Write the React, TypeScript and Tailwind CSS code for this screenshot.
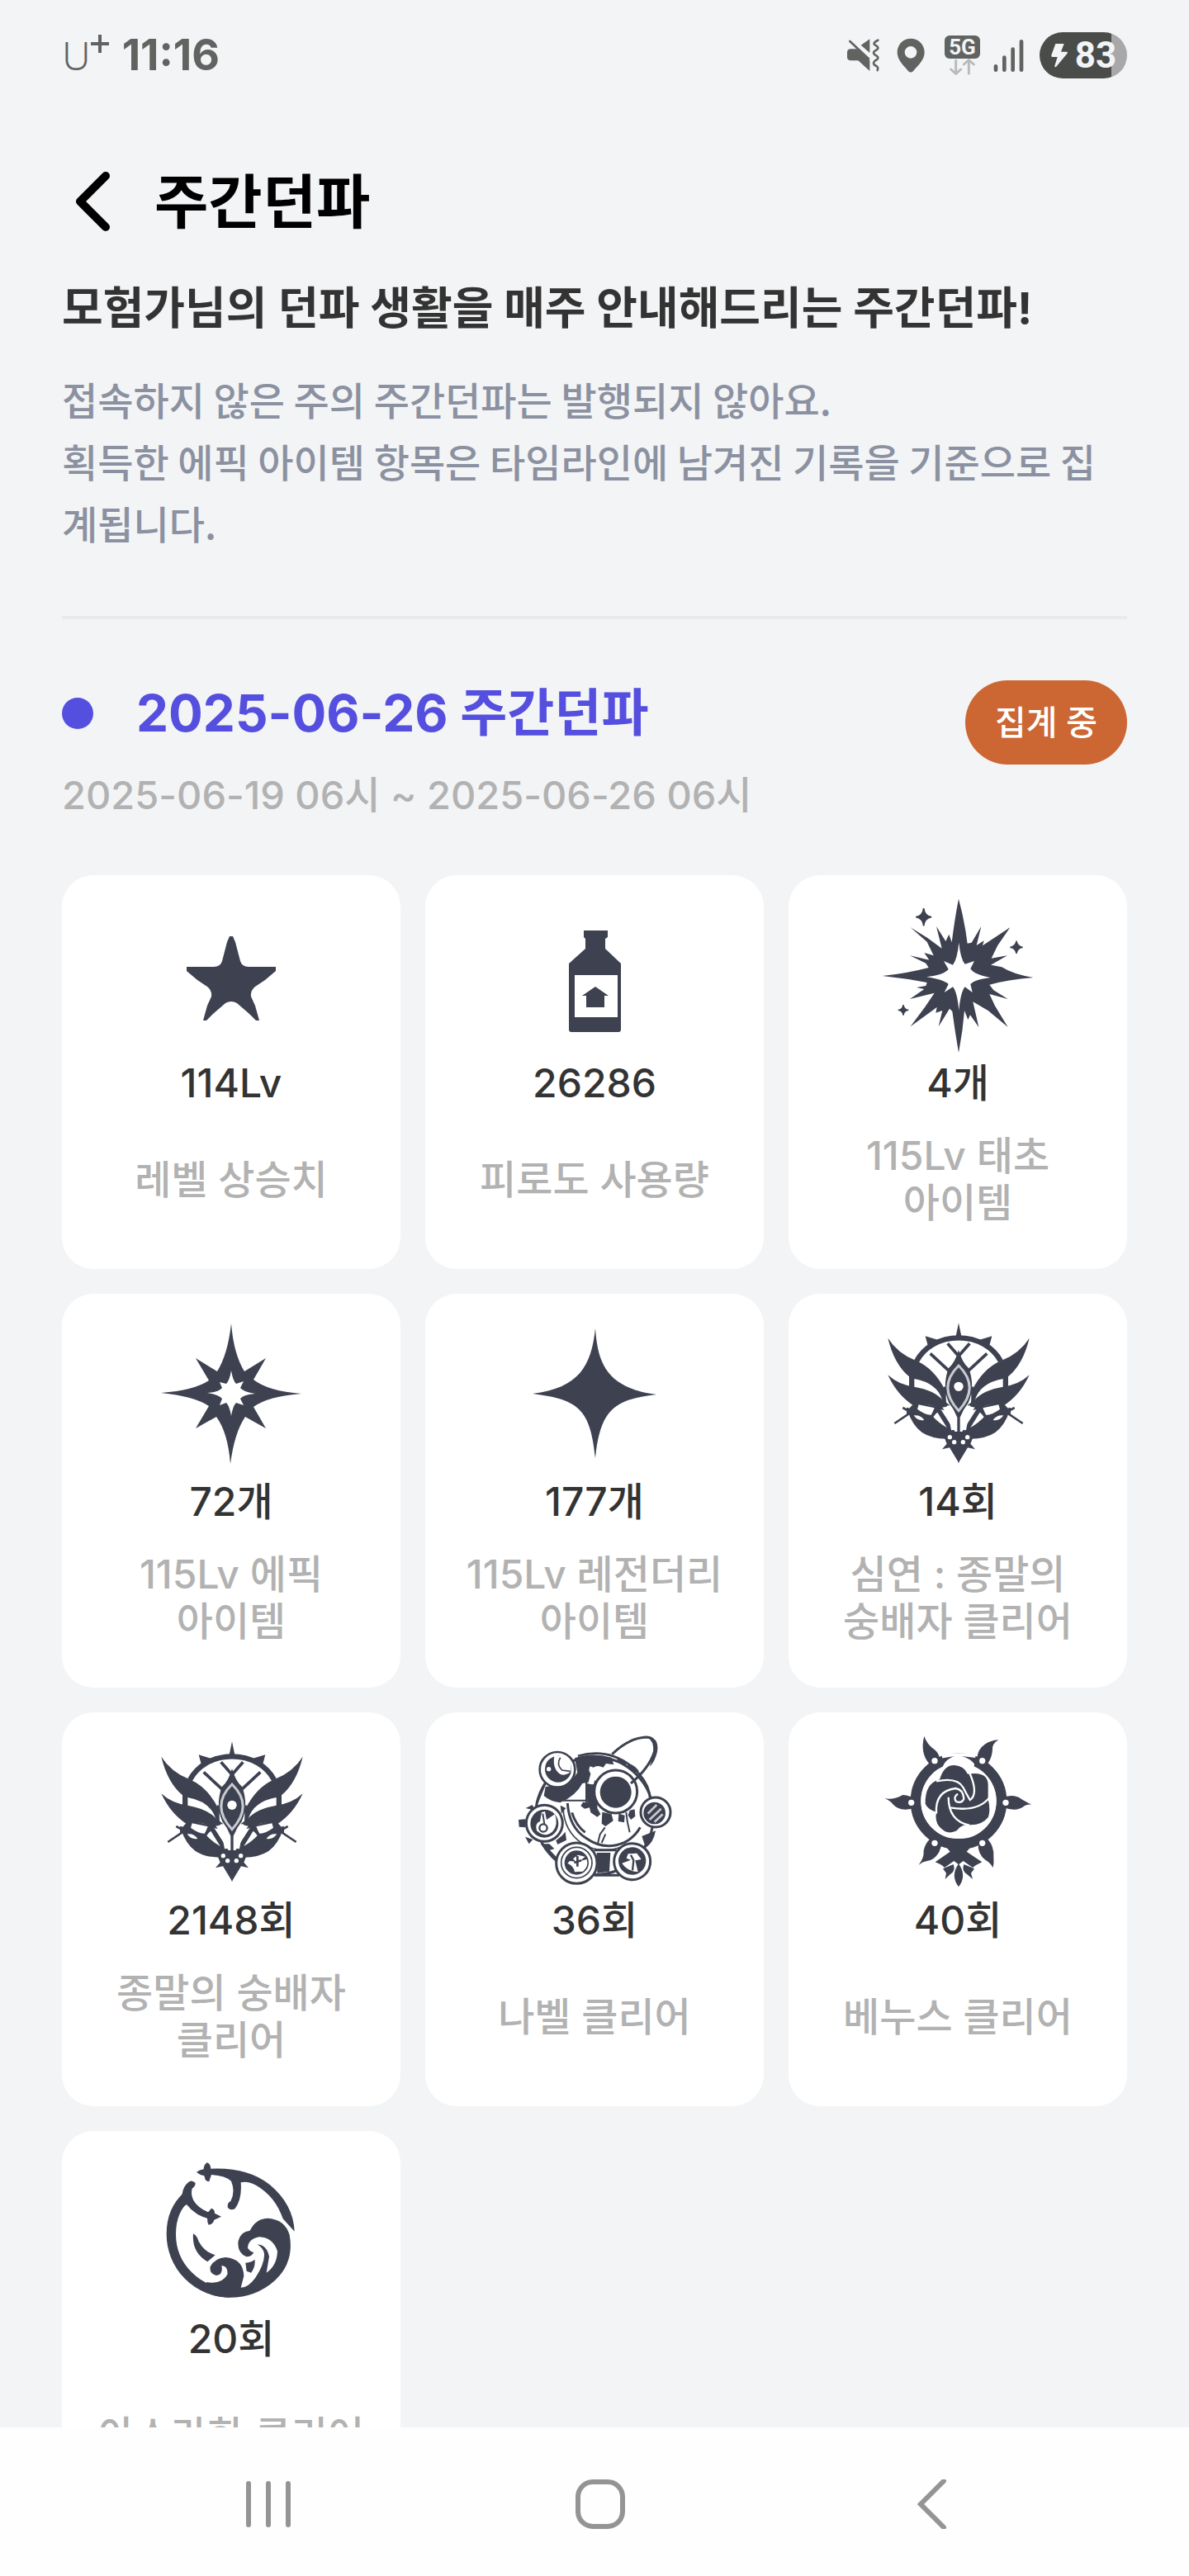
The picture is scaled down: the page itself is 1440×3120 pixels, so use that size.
import type { ReactNode } from 'react';

const INK = '#3e4150';

function StarIcon() {
  return (
    <svg viewBox="0 0 190 190" className="h-[190px] w-[190px]" fill={INK} aria-hidden="true">
      <path d="M93 46H97L100 53L106 76Q108 83 116 83H149V88L136 99L124 107Q118 112 119 119L124 130L129 148H125L117 140L102 127Q95 123 88 127L73 140L65 148H61L66 130L71 119Q72 112 66 107L54 99L41 88V83H74Q82 83 84 76L90 53Z" />
    </svg>
  );
}

function PotionIcon() {
  return (
    <svg viewBox="0 0 190 190" className="h-[190px] w-[190px]" fill={INK} aria-hidden="true">
      <path d="M82 39H111V47L108 49V61L127 79V159Q127 162 124 162H67Q64 162 64 159V79L84 61V49L82 47Z" />
      <path d="M71 93H123V144H71Z" fill="#fff" />
      <path d="M96 107L112 118H107V132H85V118H80Z" />
    </svg>
  );
}

function BurstIcon() {
  return (
    <svg viewBox="75 54 570 570" className="h-[190px] w-[190px]" fill={INK} aria-hidden="true">
      <path d="M363 56Q378 110 388 170L395 218L410 215L445 156L428 225L455 208L450 226L550 160L505 225L482 272L540 262L480 296L520 304Q560 330 634 342Q540 350 475 368L490 388L542 420L475 402L495 445L542 522L470 462L415 430L436 522L405 478L397 495L384 462Q378 540 363 614Q350 540 340 465L330 455L290 520L304 462L280 470L284 450L188 520L240 450L275 398L186 420L238 384L210 378L244 372L248 360Q170 345 86 336Q170 328 254 306L244 290L186 262L256 278L238 252L272 262L248 212L188 160L250 198L302 236L282 156L316 210L328 185L338 214Q350 120 363 56Z" />
      <path d="M364 215Q370 275 386 293L420 282L406 310Q420 332 478 342Q420 350 406 366L413 396L386 376Q370 395 364 462Q358 395 342 376L311 396L326 366Q310 350 246 340Q310 332 326 312L309 282L342 296Q358 275 364 215Z" fill="#fff" />
      <path d="M236 90Q239 118 264 122Q239 126 236 154Q233 126 208 122Q233 118 236 90Z" stroke={INK} strokeWidth="5" />
      <path d="M573 209Q576 229 596 232Q576 235 573 255Q570 235 550 232Q570 229 573 209Z" stroke={INK} strokeWidth="4" />
      <path d="M162 441Q164 458 181 460Q164 462 162 479Q160 462 143 460Q160 458 162 441Z" stroke={INK} strokeWidth="4" />
    </svg>
  );
}

function EpicIcon() {
  return (
    <svg viewBox="0 0 190 190" className="h-[190px] w-[190px]" fill={INK} aria-hidden="true">
      <path d="M95 8Q98 45 111 66L137 50L122 76Q140 90 180 93Q140 96 122 109L137 135L112 121Q99 140 94 178Q91 140 77 121L52 135L68 108Q50 96 10 92Q50 89 68 77L52 50L78 66Q91 45 95 8Z" />
      <path d="M95 65Q97 77 101 81L110 78L106 86Q110 91 124 93Q110 94 106 99L110 107L101 104Q97 108 95 120Q93 108 89 104L81 107L84 99Q80 94 66 92Q80 91 84 86L81 79L89 81Q93 77 95 65Z" fill="#fff" />
    </svg>
  );
}

function LegendaryIcon() {
  return (
    <svg viewBox="0 0 190 190" className="h-[190px] w-[190px]" fill={INK} aria-hidden="true">
      <path d="M96 14C99 58 111 86 170 94C119 100 102 112 96 171C90 112 76 100 20 93C76 86 91 60 96 14Z" />
    </svg>
  );
}

function WingHalf() {
  return (
    <>
      <path d="M180 206C207 156 262 121 334 121" fill="none" stroke={INK} strokeWidth="19" />
      <path d="M212 115L262 130L224 160Z" />
      <path d="M76 122Q112 178 178 204Q245 232 286 315L274 348Q255 285 172 270V302L153 297V262Q98 215 76 122Z" />
      <path d="M76 256Q115 292 172 299Q245 312 274 346L300 365L286 385L262 380Q235 362 195 360L170 368Q110 330 76 256Z" />
      <path d="M147 384L178 352L264 374L320 462H334V489L290 488Q235 488 200 465Q165 440 147 384Z" />
      <path d="M188 364L245 376L234 402Q205 398 183 380Z" fill="#fff" />
      <path d="M170 403Q195 400 208 420Q185 425 170 403Z" fill="#fff" />
      <path d="M256 392L290 447Q262 432 238 406Z" fill="#fff" />
      <path d="M274 374L296 366L322 455L306 457Q298 400 274 374Z" fill="#fff" />
      <path d="M130 375L160 392L100 432M148 375V400" fill="none" stroke={INK} strokeWidth="8" />
      <path d="M230 178L302 245M293 142L334 188M262 372L236 406" fill="none" stroke={INK} strokeWidth="11" />
      <path d="M286 300Q276 330 284 372" fill="none" stroke={INK} strokeWidth="13" />
      <path d="M276 470H334V576L300 520L273 526L290 506Z" />
      <circle cx="301" cy="482" r="8" fill="#fff" />
      <circle cx="317" cy="500" r="8" fill="#fff" />
    </>
  );
}

function WingsIcon() {
  return (
    <svg viewBox="45 45 570 570" className="h-[190px] w-[190px]" fill={INK} aria-hidden="true">
      <path d="M333 67L344 120H322Z" />
      <WingHalf />
      <g transform="matrix(-1 0 0 1 666 0)">
        <WingHalf />
      </g>
      <path d="M333 165Q346 212 370 232Q394 300 368 358Q350 380 338 410V480H328V410Q316 380 298 358Q272 300 296 232Q320 212 333 165Z" />
      <path d="M333 222Q412 300 333 386Q254 300 333 222Z" fill="none" stroke="#c9cad0" strokeWidth="9" />
      <circle cx="333" cy="298" r="17" fill="#fff" />
    </svg>
  );
}

function MachineIcon() {
  return (
    <svg viewBox="45 66 570 570" className="h-[190px] w-[190px]" fill={INK} aria-hidden="true">
      <circle cx="330" cy="358" r="214" fill="#fff" stroke={INK} strokeWidth="9" />
      <path d="M258 148Q320 126 392 146L400 172L372 168L362 182Q340 172 326 182L314 178Q306 190 316 205L308 236L286 240Q262 286 205 310Q170 306 146 285L152 252L240 240L268 200Z" />
      <path d="M270 140Q400 105 492 205Q545 265 528 330" fill="none" stroke={INK} strokeWidth="8" />
      <path d="M412 148L440 156L446 174L414 164ZM450 166Q475 172 492 196L476 200L452 182Z" />
      <path d="M232 312Q238 400 298 438Q365 486 438 455Q476 436 496 400M248 346Q262 392 296 418" fill="none" stroke={INK} strokeWidth="9" />
      <path d="M216 330Q220 415 285 458Q350 500 430 470" fill="none" stroke={INK} strokeWidth="5" />
      <path d="M216 302H330M300 236V310" fill="none" stroke={INK} strokeWidth="6" />
      <path d="M300 238Q325 250 345 236L340 330L352 352L340 362L316 346L312 328L294 332L280 322L288 308L304 310Z" />
      <circle cx="407" cy="270" r="78" fill="#fff" stroke={INK} strokeWidth="9" />
      <circle cx="407" cy="272" r="57" />
      <path d="M334 230Q318 272 336 315" fill="none" stroke={INK} strokeWidth="7" />
      <path d="M358 344L392 352L398 376L370 396L356 386ZM418 350L440 356L438 382L416 378ZM458 338L476 334L478 360L462 372L452 356Z" />
      <path d="M368 400L350 425L342 458M445 345Q448 380 458 418M370 424L356 456" fill="none" stroke={INK} strokeWidth="6" />
      <path d="M394 134Q455 74 520 72Q558 74 548 124Q528 186 462 240" fill="none" stroke={INK} strokeWidth="9" />
      <path d="M508 68Q568 68 558 125Q550 160 530 180Q548 130 543 105Q540 76 508 68Z" />
      <path d="M338 492H388L384 560L340 566ZM502 432L552 412Q545 455 516 474Z" />
      <path d="M328 482H410M330 574H420M150 470L196 518M120 312L150 240" fill="none" stroke={INK} strokeWidth="9" />
      <path d="M80 330L104 318L114 338ZM54 372L78 370V400L56 398ZM78 434L106 444L92 460ZM206 320L226 330L210 350ZM212 430L224 416L228 446L196 462L190 448ZM134 460H166L184 478L156 486Z" />
      <circle cx="195" cy="190" r="64" fill="#fff" stroke={INK} strokeWidth="8" />
      <circle cx="198" cy="188" r="48" />
      <path d="M184 140Q176 186 205 206Q225 215 244 196Q250 155 218 140Z" fill="#fff" />
      <path d="M206 146Q190 170 212 192L242 196" fill="none" stroke={INK} strokeWidth="5" />
      <circle cx="164" cy="188" r="8" fill="#fff" />
      <circle cx="148" cy="385" r="66" fill="#fff" stroke={INK} strokeWidth="9" />
      <circle cx="148" cy="386" r="51" />
      <path d="M138 345L150 342L156 372L186 352Q200 390 178 415Q150 440 120 412Q112 385 132 378Z" fill="#fff" />
      <circle cx="144" cy="402" r="14" fill="none" stroke={INK} strokeWidth="7" />
      <path d="M142 350L148 388" fill="none" stroke={INK} strokeWidth="6" />
      <circle cx="265" cy="530" r="74" fill="#fff" stroke={INK} strokeWidth="9" />
      <circle cx="265" cy="528" r="56" fill="none" stroke={INK} strokeWidth="5" />
      <circle cx="265" cy="528" r="44" />
      <path d="M232 530Q255 540 258 562L288 560Q310 540 302 516L278 522L296 506L270 500L252 514L262 524L240 522Z" fill="#fff" />
      <path d="M256 528L282 520M268 504V542" fill="none" stroke={INK} strokeWidth="8" />
      <circle cx="467" cy="524" r="66" fill="#fff" stroke={INK} strokeWidth="9" />
      <circle cx="467" cy="522" r="50" />
      <path d="M430 530Q450 560 488 562L478 520L500 516L484 494L452 496L446 512L462 518Z" fill="#fff" />
      <path d="M462 500L472 520L468 556" fill="none" stroke={INK} strokeWidth="7" />
      <circle cx="552" cy="345" r="54" fill="#fff" stroke={INK} strokeWidth="9" />
      <circle cx="548" cy="348" r="40" />
      <path d="M524 350L556 318M530 372L572 332M548 380L578 352" fill="none" stroke="#c9cad0" strokeWidth="8" />
    </svg>
  );
}

function RoseIcon() {
  return (
    <svg viewBox="45 66 570 570" className="h-[190px] w-[190px]" fill={INK} aria-hidden="true">
      <circle cx="333" cy="305" r="156" fill="none" stroke={INK} strokeWidth="38" />
      <path d="M272 130H396L388 185H276Z" fill="#fff" />
      <path d="M208 68Q216 96 246 118Q262 132 264 150L318 141Q276 156 272 194L246 192L226 168Q192 130 208 68Z" />
      <path d="M478 82Q454 96 456 118Q454 146 440 166L418 198L398 194Q396 156 344 141L400 148Q402 116 428 98Q448 84 478 82Z" />
      <path d="M64 295Q100 300 130 282Q158 284 178 300L170 330Q120 345 94 316Q84 302 64 295Z" />
      <path d="M598 317Q572 304 560 296Q535 278 496 290V328Q545 345 572 322Q584 314 598 317Z" />
      <path d="M188 536Q208 512 206 484Q212 455 232 440L272 462L262 490Q244 520 218 522Q202 524 188 536Z" />
      <path d="M458 546Q448 528 430 518Q402 498 404 456L440 444Q462 470 460 505Q462 528 458 546Z" />
      <path d="M262 440H404L362 488L418 526Q396 536 384 546L350 522L333 535L316 522L282 546Q270 534 248 526L302 488Z" />
      <path d="M276 550L314 534Q324 560 300 572L284 588L288 566ZM390 550L352 534Q342 560 366 572L384 588L378 566ZM333 532Q364 576 333 616Q302 576 333 532Z" />
      <circle cx="333" cy="303" r="137" fill="#fff" />
      <path d="M264 226Q280 172 318 174Q352 176 366 206Q440 194 440 246V296Q450 340 440 364Q414 396 362 390Q340 392 326 412Q290 430 262 396Q246 376 252 344Q220 334 212 314Q210 240 264 226Z" />
      <path d="M252 232Q330 216 350 256Q362 280 374 300M372 200Q408 280 372 302M446 290Q404 346 302 328M372 392Q296 376 296 290M252 350Q246 268 322 258Q350 262 352 296Q344 314 324 306Q312 290 330 278" fill="none" stroke="#fff" strokeWidth="7" />
      <circle cx="246" cy="158" r="11" fill="#fff" />
      <circle cx="419" cy="158" r="11" fill="#fff" />
      <circle cx="161" cy="310" r="11" fill="#fff" />
      <circle cx="504" cy="310" r="11" fill="#fff" />
      <circle cx="246" cy="457" r="11" fill="#fff" />
      <circle cx="419" cy="457" r="11" fill="#fff" />
    </svg>
  );
}

function WaveIcon() {
  return (
    <svg viewBox="375 147 570 570" className="h-[190px] w-[190px]" fill={INK} aria-hidden="true">
      <path d="M500 300Q442 350 442 437A213 213 0 0 0 655 651" fill="none" stroke={INK} strokeWidth="34" />
      <path d="M504 250Q516 238 530 252Q530 264 518 272Q510 300 532 328Q556 354 590 362L586 384Q530 372 498 330L470 350L462 320L482 292Q486 264 504 250Z" />
      <path d="M572 178Q584 180 586 200Q720 194 800 258Q886 330 890 428L848 382Q820 300 750 260Q720 244 695 250Q700 310 674 345Q658 354 648 342Q644 324 658 318Q676 284 660 245Q640 226 588 222L580 246Q572 248 566 240L562 226Q544 222 534 213Q544 204 560 202Q560 186 572 178Z" />
      <path d="M588 344Q600 346 600 362L624 374L598 386Q594 402 578 404Q572 392 574 384L566 370Z" />
      <path d="M715 520Q680 505 686 462Q694 428 728 425Q750 380 795 380Q855 385 872 440Q890 540 820 605Q750 668 655 668Q600 668 550 640L572 612Q624 622 646 585Q650 555 625 552Q632 586 606 588Q580 582 584 556Q600 525 640 522Q704 528 706 590L695 632Q722 632 748 596Q782 545 780 510Q778 490 755 475Q790 478 798 520L788 578Q826 552 828 500Q812 450 762 448Q722 455 720 488Q730 502 742 504Q735 520 715 520Z" />
      <path d="M522 436Q536 444 542 464Q562 502 602 514L574 538Q516 504 522 436ZM712 542Q734 540 746 530Q748 560 732 578L716 572Z" />
    </svg>
  );
}

type Stat = { value: string; label: string; icon: ReactNode };

const stats: Stat[] = [
  { value: '114Lv', label: '레벨 상승치', icon: <StarIcon /> },
  { value: '26286', label: '피로도 사용량', icon: <PotionIcon /> },
  { value: '4개', label: '115Lv 태초\n아이템', icon: <BurstIcon /> },
  { value: '72개', label: '115Lv 에픽\n아이템', icon: <EpicIcon /> },
  { value: '177개', label: '115Lv 레전더리\n아이템', icon: <LegendaryIcon /> },
  { value: '14회', label: '심연 : 종말의\n숭배자 클리어', icon: <WingsIcon /> },
  { value: '2148회', label: '종말의 숭배자\n클리어', icon: <WingsIcon /> },
  { value: '36회', label: '나벨 클리어', icon: <MachineIcon /> },
  { value: '40회', label: '베누스 클리어', icon: <RoseIcon /> },
  { value: '20회', label: '아스라한 클리어', icon: <WaveIcon /> },
];

function StatusBar() {
  return (
    <div className="flex h-[146px] items-center justify-between pb-3 text-[#616361]">
      <div className="flex items-center">
        <span className="font-['Noto_Sans'] text-5xl font-light">U</span>
        <svg viewBox="0 0 22 22" className="mb-7 h-[22px] w-[22px]" stroke="#616361" strokeWidth="4" aria-hidden="true">
          <path d="M11 0V22M0 11H22" />
        </svg>
        <span className="ml-4 text-[52px] font-bold">11:16</span>
      </div>
      <div className="flex items-center">
        <svg viewBox="75 80 123 126" className="h-[42px] w-[41px]" fill="#616361" role="img" aria-label="Vibrate">
          <path d="M92 120H114L160 162V200L118 162H92Q78 162 78 150V132Q78 120 92 120Z" />
          <path d="M160 84V134L128 106Z" />
          <path d="M88 92L156 156M190 88Q168 98 180 106Q200 116 180 126Q168 134 180 142Q200 152 180 162Q168 172 180 180Q194 186 188 197" fill="none" stroke="#616361" strokeWidth="8" strokeLinecap="round" />
        </svg>
        <svg viewBox="259 78 102 126" className="ml-5 h-[42px] w-[34px]" fill="#616361" role="img" aria-label="Location">
          <path fillRule="evenodd" d="M310 80C338 80 360 102 360 130C360 158 338 176 320 197Q310 208 300 197C282 176 261 158 261 130C261 102 282 80 310 80ZM310 108A22 22 0 1 0 310 152A22 22 0 1 0 310 108Z" />
        </svg>
        <div className="ml-6 flex flex-col items-center">
          <span className="flex h-7 w-[43px] items-center justify-center rounded-md bg-[#616361] font-[Roboto] text-[26px] font-bold leading-7 text-[#f3f4f6]">5G</span>
          <svg viewBox="445 149 99 60" className="h-5 w-[33px]" fill="none" stroke="#b9bbbb" strokeWidth="9" strokeLinecap="round" strokeLinejoin="round" aria-hidden="true">
            <path d="M471 156V203M453 188L471 204L489 188M518 203V155M500 170L518 154L536 170" />
          </svg>
        </div>
        <svg viewBox="609 80 111 120" className="ml-4 h-10 w-[37px]" stroke="#616361" strokeWidth="14" strokeLinecap="round" role="img" aria-label="Signal">
          <path d="M618 180V193M649 148V193M680 118V193M711 90V193" />
        </svg>
        <div className="ml-[19px] flex h-14 w-[106px] items-center justify-center gap-2 rounded-full bg-linear-to-r from-[#4a4c4a] from-82% to-[#a8a8aa] to-82% text-[#f3f4f6]">
          <svg viewBox="807 95 66 90" className="h-[30px] w-[22px]" fill="#f3f4f6" aria-hidden="true">
            <path d="M826 98H857L846 127H868Q872 130 868 134L828 182Q822 184 823 178L833 146H814Q809 144 811 139Z" />
          </svg>
          <span className="font-[Roboto] text-[44px] font-bold leading-[56px]">83</span>
        </div>
      </div>
    </div>
  );
}

function StatCard({ value, label, icon }: Stat) {
  return (
    <li className="flex flex-col items-center rounded-[38px] bg-white pb-[52px] pt-7 text-center text-[48px] font-medium">
      {icon}
      <p className="mt-1 leading-[60px] text-[#333]">{value}</p>
      <p className="mt-[29px] flex h-[114px] items-center whitespace-pre-line leading-[57px] text-[#b2b2b2]">{label}</p>
    </li>
  );
}

export default function App() {
  return (
    <div className="flex h-screen flex-col bg-[#f3f4f6] font-[Inter,'Noto_Sans_CJK_KR',sans-serif]">
      <div className="min-h-0 flex-1 overflow-y-auto px-[75px] [scrollbar-width:none]">
        <StatusBar />
        <header className="flex h-[196px] items-center gap-[50px] text-black">
          <button type="button" aria-label="뒤로" className="pl-4">
            <svg viewBox="0 0 46 72" className="h-[72px] w-[46px]" fill="none" stroke="currentColor" strokeWidth="10" strokeLinecap="round" strokeLinejoin="round" aria-hidden="true">
              <path d="M37 5L6 36L37 67" />
            </svg>
          </button>
          <h1 className="text-[71px] font-bold leading-[80px]">주간던파</h1>
        </header>
        <main>
          <h2 className="text-[54px] font-bold leading-[64px] text-[#333]">모험가님의 던파 생활을 매주 안내해드리는 주간던파!</h2>
          <p className="mt-[39px] font-['Noto_Sans_CJK_KR',sans-serif] text-[47px] font-medium leading-[75px] text-[#8b91a0]">
            접속하지 않은 주의 주간던파는 발행되지 않아요.
            <br />
            획득한 에픽 아이템 항목은 타임라인에 남겨진 기록을 기준으로 집계됩니다.
          </p>
          <hr className="mt-[76px] border-t-4 border-[#e9eaec]" />
          <section className="pb-[61px] pt-[74px]">
            <div className="flex items-start justify-between">
              <div>
                <div className="flex items-center gap-[52px]">
                  <span className="h-[38px] w-[38px] rounded-full bg-[#554fdf]" />
                  <h3 className="text-[62px] font-bold leading-[80px] text-[#554fdf]">2025-06-26 주간던파</h3>
                </div>
                <p className="mt-[23px] text-[47px] font-medium leading-[72px] text-[#b2b2b2]">2025-06-19 06시 ~ 2025-06-26 06시</p>
              </div>
              <span className="rounded-full bg-[#cc6733] px-9 text-[41px] font-medium leading-[102px] text-white">집계 중</span>
            </div>
            <ul className="mt-[61px] grid grid-cols-3 gap-[30px]">
              {stats.map((stat) => (
                <StatCard key={stat.label} {...stat} />
              ))}
            </ul>
          </section>
        </main>
      </div>
      <nav className="grid h-[180px] shrink-0 grid-cols-3 bg-[#fefefe] pl-[124px] pr-[110px]">
        <button type="button" aria-label="최근 앱" className="flex items-center justify-center pt-[5px]">
          <svg viewBox="0 0 60 60" className="h-[60px] w-[60px]" stroke="#949494" strokeWidth="6" strokeLinecap="round" aria-hidden="true">
            <path d="M6 5V55M30 5V55M54 5V55" />
          </svg>
        </button>
        <button type="button" aria-label="홈" className="flex items-center justify-center pt-[5px]">
          <svg viewBox="0 0 60 60" className="h-[60px] w-[60px]" fill="none" stroke="#949494" strokeWidth="6" aria-hidden="true">
            <rect x="3" y="3" width="54" height="54" rx="18" />
          </svg>
        </button>
        <button type="button" aria-label="뒤로 가기" className="flex items-center justify-center pt-[5px]">
          <svg viewBox="0 0 60 60" className="h-[60px] w-[60px]" fill="none" stroke="#949494" strokeWidth="6" strokeLinecap="round" aria-hidden="true">
            <path d="M44 2L16 30L44 58" />
          </svg>
        </button>
      </nav>
    </div>
  );
}
